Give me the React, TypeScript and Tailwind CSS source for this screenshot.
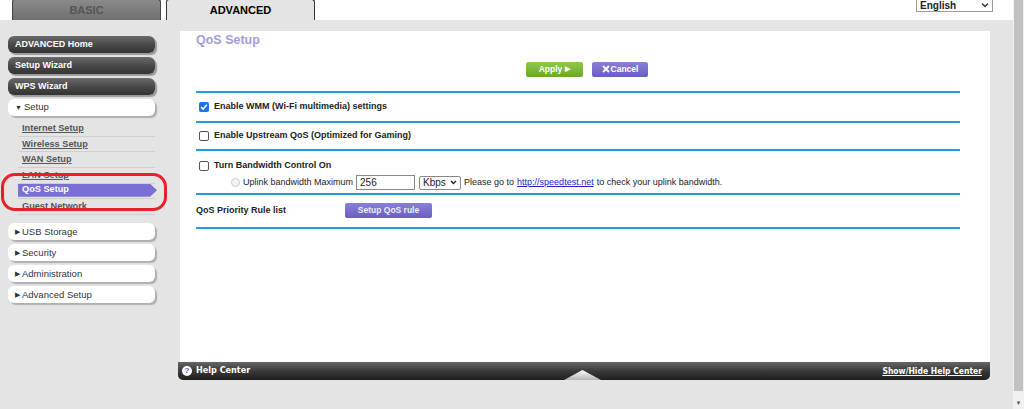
import React from "react";

const font = { fontFamily: '"Liberation Sans", Arial, sans-serif' };
const narrow = { fontFamily: '"DejaVu Sans Condensed", "Liberation Sans Narrow", sans-serif' };

function DarkButton({ label }: { label: string }) {
  return (
    <div className="h-[17px] w-[147px] rounded-[6px] bg-gradient-to-b from-[#6a6a6a] via-[#4a4a4a] to-[#333] pl-[7px] flex items-center text-[9px] font-bold text-white shadow-[2px_2px_1px_#9a9a9a]">
      {label}
    </div>
  );
}

function WhiteButton({ label, open = false }: { label: string; open?: boolean }) {
  return (
    <div className="h-[17px] w-[147px] rounded-[6px] bg-white pl-[7px] flex items-center gap-[2px] text-[9.5px] text-[#333] shadow-[2px_2px_1px_#b0b0b0]">
      <span className="text-[7px] leading-none">{open ? "▼" : "▶"}</span>
      <span>{label}</span>
    </div>
  );
}

function SubItem({ label, active = false }: { label: string; active?: boolean }) {
  return (
    <div className="h-[15.7px] ml-[10px] w-[137px] border-b border-[#cfcfcf] flex flex-col">
      {active ? (
        <div className="h-[13px] w-[139px] bg-[#7a6fd4] [clip-path:polygon(0_0,95%_0,100%_50%,95%_100%,0_100%)] pl-[4px] flex items-center text-[9.2px] font-bold text-white">
          {label}
        </div>
      ) : (
        <div className="pl-[4px] pt-[1px] text-[9.2px] font-bold text-[#555] underline leading-[12px]">{label}</div>
      )}
    </div>
  );
}

function Line() {
  return <div className="h-[2px] bg-[#1ea0d8] w-[764px] ml-[16px]" />;
}

function Check({ checked = false }: { checked?: boolean }) {
  return checked ? (
    <span className="w-[10px] h-[10px] rounded-[2px] bg-[#1a73e8] flex items-center justify-center">
      <svg width="8" height="8" viewBox="0 0 8 8">
        <path d="M1.2 4.2 L3.2 6 L6.8 1.8" stroke="white" strokeWidth="1.6" fill="none" />
      </svg>
    </span>
  ) : (
    <span className="w-[10px] h-[10px] rounded-[2px] border border-[#555] bg-white" />
  );
}

export default function App() {
  return (
    <div className="w-[1024px] h-[409px] flex overflow-hidden bg-[#e4e4e4]" style={font}>
      <div className="w-[1013px] flex flex-col">
        {/* top tabs */}
        <div className="h-[20px] bg-white flex items-end relative">
          <div className="ml-[12px] w-[149px] h-[21px] -mt-[1px] bg-gradient-to-b from-[#8a8a8a] to-[#707070] rounded-t-[3px] border border-[#444] border-b-0 flex items-center justify-center text-[11px] font-bold text-[#555]">
            BASIC
          </div>
          <div className="ml-[5px] w-[149px] h-[21px] -mt-[1px] bg-[#e4e4e4] rounded-t-[3px] border border-[#333] border-b-0 flex items-center justify-center text-[11px] font-bold text-black">
            ADVANCED
          </div>
          <div className="ml-auto mr-[20px] self-start -mt-[2px] w-[77px] h-[14px] border border-[#999] bg-white flex items-center justify-between px-[3px] text-[10px] font-bold text-[#222]">
            <span>English</span>
            <svg width="8" height="6" viewBox="0 0 8 6">
              <path d="M1 1.5 L4 4.5 L7 1.5" stroke="#333" strokeWidth="1.5" fill="none" />
            </svg>
          </div>
        </div>

        <div className="flex flex-1">
          {/* sidebar */}
          <div className="w-[178px] pl-[8px] pt-[16px] flex flex-col relative">
            <div className="flex flex-col gap-[4px]">
              <DarkButton label="ADVANCED Home" />
              <DarkButton label="Setup Wizard" />
              <DarkButton label="WPS Wizard" />
              <WhiteButton label="Setup" open />
            </div>
            <div className="flex flex-col mt-[5px]">
              <SubItem label="Internet Setup" />
              <SubItem label="Wireless Setup" />
              <SubItem label="WAN Setup" />
              <SubItem label="LAN Setup" />
              <SubItem label="QoS Setup" active />
              <SubItem label="Guest Network" />
            </div>
            <div className="flex flex-col gap-[4px] mt-[8px]">
              <WhiteButton label="USB Storage" />
              <WhiteButton label="Security" />
              <WhiteButton label="Administration" />
              <WhiteButton label="Advanced Setup" />
            </div>
            {/* red annotation */}
            <div className="absolute left-[1px] top-[153px] w-[166px] h-[38px] rounded-[14px] border-[3px] border-[#e8202a]" />
          </div>

          {/* content */}
          <div className="flex flex-col mt-[11px]">
            <div className="w-[810px] ml-[2px] h-[331px] bg-white flex flex-col">
              <div className="pl-[16px] text-[12.5px] font-bold text-[#a39be0]">QoS Setup</div>
              <div className="flex justify-center gap-[9px] mt-[12px] pl-[4px]">
                <div className="w-[57px] h-[15px] rounded-[2px] bg-gradient-to-b from-[#8fca4a] to-[#6aa72a] flex items-center justify-center gap-[3px] text-[8.5px] font-bold text-white">
                  Apply <span className="text-[7px]">▶</span>
                </div>
                <div className="w-[56px] h-[15px] rounded-[2px] bg-gradient-to-b from-[#8a7fd8] to-[#6a5fc0] flex items-center justify-center gap-[1px] text-[8.5px] font-bold text-white">
                  <svg width="8" height="8" viewBox="0 0 8 8">
                    <path d="M1 1 L7 7 M7 1 L1 7" stroke="white" strokeWidth="1.8" />
                  </svg>
                  Cancel
                </div>
              </div>
              <div className="mt-[14px]">
                <Line />
              </div>
              <div className="h-[28px] flex items-center gap-[5px] pl-[19px] text-[9px] font-bold text-[#222]">
                <Check checked />
                <span>Enable WMM (Wi-Fi multimedia) settings</span>
              </div>
              <Line />
              <div className="h-[26px] flex items-center gap-[5px] pl-[19px] text-[9px] font-bold text-[#222]">
                <Check />
                <span>Enable Upstream QoS (Optimized for Gaming)</span>
              </div>
              <Line />
              <div className="h-[42px] flex flex-col pl-[19px] pt-[8px] text-[9px] text-[#222]">
                <div className="flex items-center gap-[5px] font-bold">
                  <Check />
                  <span>Turn Bandwidth Control On</span>
                </div>
                <div className="flex items-center ml-[32px] mt-[3px] text-[9px]">
                  <span className="w-[9px] h-[9px] rounded-full border border-[#ccc] bg-[#f4f4f4] mr-[3px]" />
                  <span>Uplink bandwidth Maximum</span>
                  <span className="ml-[3px] w-[59px] h-[15px] border border-[#888] flex items-center pl-[3px] text-[10px]">256</span>
                  <span className="ml-[4px] w-[42px] h-[14px] border border-[#888] rounded-[2px] flex items-center justify-between px-[3px] text-[10px]">
                    Kbps
                    <svg width="7" height="5" viewBox="0 0 7 5">
                      <path d="M1 1 L3.5 3.5 L6 1" stroke="#222" strokeWidth="1.4" fill="none" />
                    </svg>
                  </span>
                  <span className="ml-[3px]">Please go to</span>
                  <span className="ml-[3px] text-[#2222cc] underline">http://speedtest.net</span>
                  <span className="ml-[3px]">to check your uplink bandwidth.</span>
                </div>
              </div>
              <Line />
              <div className="h-[32px] flex items-center pl-[16px]">
                <span className="w-[149px] text-[9px] font-bold text-[#222]">QoS Priority Rule list</span>
                <span className="w-[87px] h-[15px] rounded-[2px] bg-gradient-to-b from-[#8a7fd8] to-[#6a5fc0] flex items-center justify-center text-[8.5px] font-bold text-[#eee]">
                  Setup QoS rule
                </span>
              </div>
              <Line />
            </div>
            {/* help bar */}
            <div className="w-[812px] h-[18px] rounded-b-[5px] bg-gradient-to-b from-[#666] via-[#3a3a3a] to-[#1e1e1e] flex items-center px-[4px] text-[9px] font-bold text-white relative">
              <span className="w-[10px] h-[10px] rounded-full bg-white text-[#5a4fc0] flex items-center justify-center text-[8px] mr-[4px]">?</span>
              <span style={narrow}>Help Center</span>
              <svg className="absolute left-[386px] bottom-0" width="37" height="11" viewBox="0 0 37 11">
                <defs>
                  <linearGradient id="tri" x1="0" y1="0" x2="0" y2="1">
                    <stop offset="0" stopColor="#ffffff" />
                    <stop offset="1" stopColor="#b5b5b5" />
                  </linearGradient>
                </defs>
                <polygon points="0,11 18.5,1 37,11" fill="url(#tri)" />
              </svg>
              <span className="ml-auto mr-[4px] underline text-[8.5px]" style={narrow}>
                Show/Hide Help Center
              </span>
            </div>
          </div>
        </div>
      </div>

      {/* scrollbar */}
      <div className="w-[11px] bg-[#f0f0f0] flex flex-col items-center">
        <div className="w-[9px] h-[391px] bg-[#c1c1c1]" />
        <div className="mt-auto mb-[3px] text-[6px] text-[#555] leading-none">▼</div>
      </div>
    </div>
  );
}
